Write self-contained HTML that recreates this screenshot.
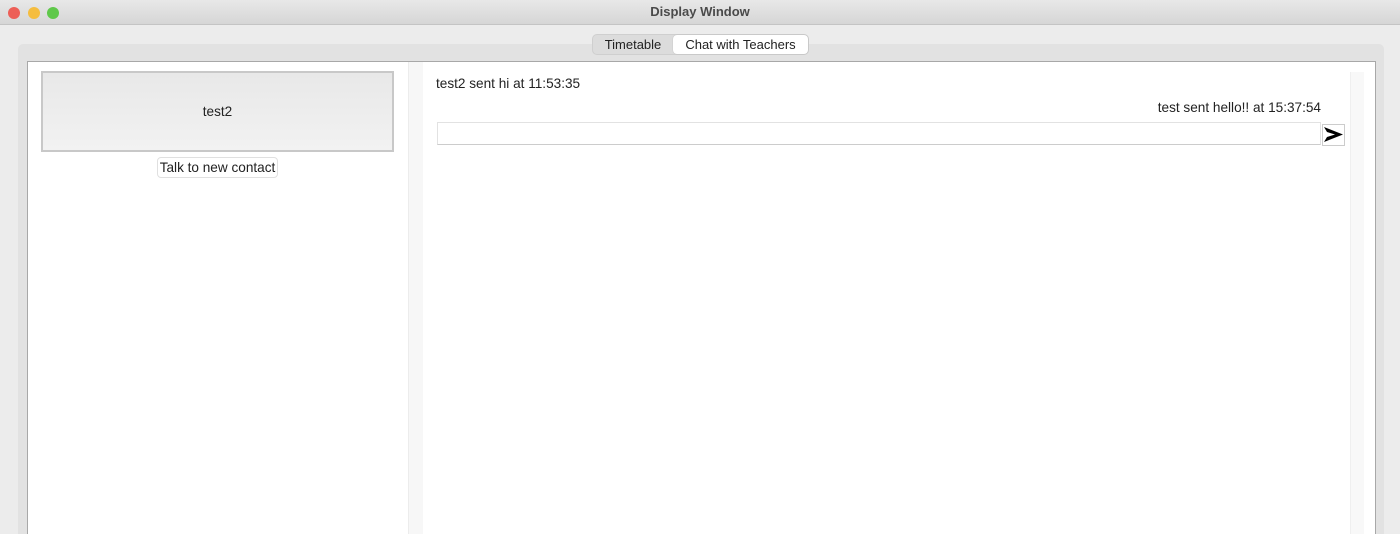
<!DOCTYPE html>
<html><head><style>
*{margin:0;padding:0;box-sizing:border-box}
html,body{width:1400px;height:542px;overflow:hidden}
body{background:#ececec;font-family:"Liberation Sans",sans-serif;font-size:13.6px;color:#222;position:relative}
.title{position:absolute;left:0;top:0;width:1400px;height:25px;background:linear-gradient(#e8e8e8,#d6d6d6);border-bottom:1px solid #c4c4c4;text-align:center;line-height:24px;font-weight:bold;color:#4a4a4a;font-size:13px}
.dot{position:absolute;top:7px;width:12px;height:12px;border-radius:50%}
.pane{position:absolute;left:18px;top:44px;width:1366px;height:500px;background:#e2e2e2;border-radius:5px}
.tabs{position:absolute;left:592px;top:34px;width:217px;height:21px;background:#dcdcdc;border-radius:5px;border:1px solid #cfcfcf}
.tab1{position:absolute;left:0;top:0;width:80px;height:19px;line-height:19px;text-align:center;color:#222;font-size:13px}
.tab2{position:absolute;left:80px;top:0;width:135px;height:19px;line-height:19px;text-align:center;background:#fff;border-radius:4px;box-shadow:0 0 1px #aaa;font-size:13px}
.inner{position:absolute;left:27px;top:61px;width:1349px;height:490px;background:#fff;border:1px solid #a8a8a8}
.div{position:absolute;left:380px;top:0;width:15px;height:490px;background:#f7f7f7;border-left:1px solid #ececec}
.sb{position:absolute;left:1322px;top:10px;width:14px;height:480px;background:#f8f8f8;border-left:1px solid #efefef}
.contact{position:absolute;left:13px;top:9px;width:353px;height:81px;border:2px solid #c8c8c8;background:linear-gradient(#e8e8e8,#f2f2f2);text-align:center;line-height:77px}
.talk{position:absolute;left:129px;top:95px;width:121px;height:21px;border:1px solid #e0e0e0;border-radius:4px;text-align:center;line-height:19px;background:#fff;white-space:nowrap}
.m1{position:absolute;left:408px;top:14px}
.m2{position:absolute;right:54px;top:38px}
.inp{position:absolute;left:409px;top:60px;width:884px;height:23px;border:1px solid #e2e2e2;border-bottom-color:#ccc}
.send{position:absolute;left:1294px;top:62px;width:23px;height:22px;border:1px solid #ccc;background:#fff}
.bot{position:absolute;left:0;top:534px;width:1400px;height:8px;background:#fff}
</style></head><body>
<div class="title">Display Window
<span class="dot" style="left:8px;background:#ed5f57"></span>
<span class="dot" style="left:28px;background:#f5bd3f"></span>
<span class="dot" style="left:47px;background:#5fc84a"></span></div>
<div class="pane"></div>
<div class="inner">
<div class="div"></div>
<div class="sb"></div>
<div class="contact">test2</div>
<div class="talk">Talk to new contact</div>
<div class="m1">test2 sent hi at 11:53:35</div>
<div class="m2">test sent hello!! at 15:37:54</div>
<div class="inp"></div>
<div class="send"><svg width="21" height="20" viewBox="0 0 21 20"><path d="M1 2 L20 9.5 L1 17 L4 12 L12 9.5 L4 7 Z" fill="#000"/></svg></div>
</div>
<div class="tabs"><div class="tab1">Timetable</div><div class="tab2">Chat with Teachers</div></div>
<div class="bot"></div>
</body></html>
